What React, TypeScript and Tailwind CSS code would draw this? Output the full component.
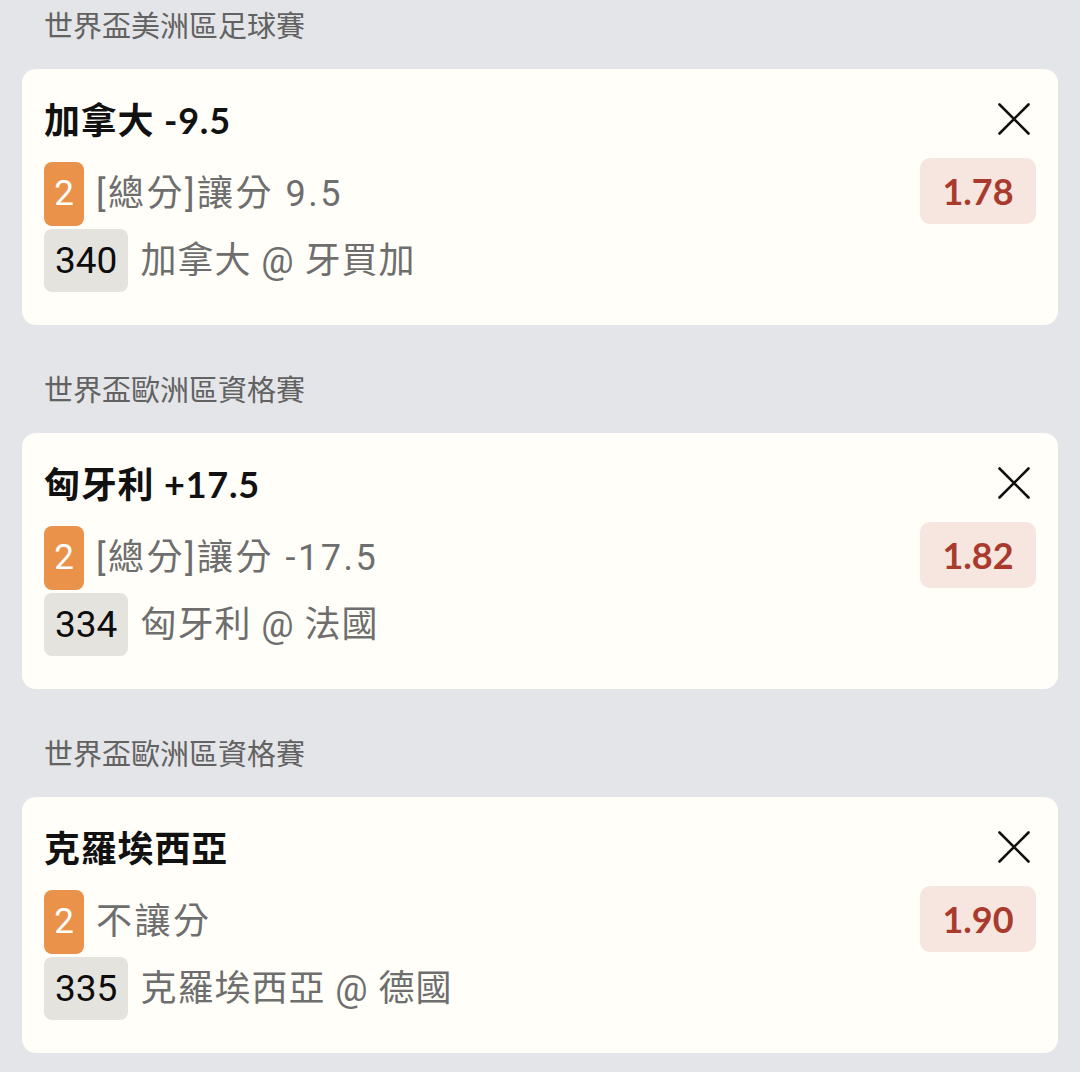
import React from "react";

type Bet = {
  league: string;
  title: string;
  market: string;
  code: string;
  match: string;
  odds: string;
};

const bets: Bet[] = [
  {
    league: "世界盃美洲區足球賽",
    title: "加拿大 -9.5",
    market: "[總分]讓分 9.5",
    code: "340",
    match: "加拿大 @ 牙買加",
    odds: "1.78",
  },
  {
    league: "世界盃歐洲區資格賽",
    title: "匈牙利 +17.5",
    market: "[總分]讓分 -17.5",
    code: "334",
    match: "匈牙利 @ 法國",
    odds: "1.82",
  },
  {
    league: "世界盃歐洲區資格賽",
    title: "克羅埃西亞",
    market: "不讓分",
    code: "335",
    match: "克羅埃西亞 @ 德國",
    odds: "1.90",
  },
];

const rowFont = { fontFamily: "Roboto, 'Noto Sans CJK TC', sans-serif" };

const CloseIcon = () => (
  <svg width="32" height="32" viewBox="0 0 32 32" fill="none">
    <path d="M1.5 1.5 L30.5 30.5 M30.5 1.5 L1.5 30.5" stroke="#111" strokeWidth="2.6" strokeLinecap="round" />
  </svg>
);

const BetCard = ({ bet }: { bet: Bet }) => (
  <section className="mb-[45px]">
    <h2 className="mb-[23px] h-[40px] pl-[22px] text-[29px] leading-[40px] text-[#626262]">{bet.league}</h2>
    <div className="flex h-[256px] rounded-[14px] bg-[#fffef8] px-[22px]">
      <div className="flex-1 pt-[29px]">
        <p className="h-[44px] text-[36px] font-bold leading-[44px] tracking-[0.8px] text-[#111]">{bet.title}</p>
        <div className="mt-[20px] flex items-center" style={rowFont}>
          <span className="flex h-[64px] w-[40px] items-center justify-center rounded-[8px] bg-[#ea9249] text-[35px] text-white">
            2
          </span>
          <span className="ml-[12px] text-[36px] leading-[44px] tracking-[2.5px] text-[#6e6e6e]">{bet.market}</span>
        </div>
        <div className="mt-[3px] flex items-center" style={rowFont}>
          <span className="flex h-[63px] items-center justify-center rounded-[8px] bg-[#e4e3de] px-[11px] text-[37px] text-[#0d0d0d]">
            {bet.code}
          </span>
          <span className="ml-[12px] text-[36px] leading-[44px] tracking-[1px] text-[#6e6e6e]">{bet.match}</span>
        </div>
      </div>
      <div className="flex flex-col items-end pt-[34px]">
        <div className="mr-[6px]">
          <CloseIcon />
        </div>
        <div className="mt-[23px] flex h-[66px] w-[116px] items-center justify-center rounded-[10px] bg-[#f6e6df] text-[36px] font-bold text-[#a83b2d]">
          {bet.odds}
        </div>
      </div>
    </div>
  </section>
);

export default function App() {
  return (
    <div
      className="min-h-[1072px] overflow-hidden bg-[#e4e5e8] px-[22px] pt-[6px]"
      style={{ fontFamily: "Lato, 'Noto Sans CJK TC', sans-serif" }}
    >
      {bets.map((bet, i) => (
        <BetCard key={i} bet={bet} />
      ))}
    </div>
  );
}
